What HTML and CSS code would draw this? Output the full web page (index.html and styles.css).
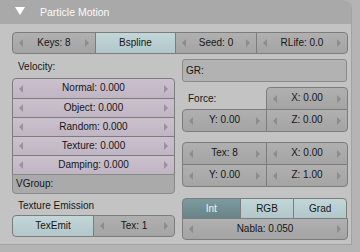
FILE: index.html
```html
<!DOCTYPE html>
<html lang="en">
<head>
  <meta charset="UTF-8">
  <title>Particle Motion</title>
  <link rel="stylesheet" href="styles.css">
</head>
<body>
  <div class="panel">
    <div class="panel-header">
      <svg class="collapse" width="12" height="10" viewBox="0 0 12 10"><polygon points="1,1 11,1 6,9" fill="#fff"/></svg>
      <span class="title">Particle Motion</span>
    </div>

    <div class="panel-body">
      <div class="btn-row top-row">
        <div class="btn num w-keys">Keys: 8</div>
        <div class="btn toggle on-light w-bspline">Bspline</div>
        <div class="btn num w-seed">Seed: 0</div>
        <div class="btn num w-rlife">RLife: 0.0</div>
      </div>

      <div class="columns">
        <div class="col">
          <div class="label label-velocity">Velocity:</div>
          <div class="stack">
            <div class="btn num lav">Normal: 0.000</div>
            <div class="btn num lav">Object: 0.000</div>
            <div class="btn num lav">Random: 0.000</div>
            <div class="btn num lav">Texture: 0.000</div>
            <div class="btn num lav">Damping: 0.000</div>
            <div class="btn field vgroup">VGroup:</div>
          </div>
          <div class="label label-emit">Texture Emission</div>
          <div class="btn-row">
            <div class="btn toggle on-light w-half">TexEmit</div>
            <div class="btn num w-half">Tex: 1</div>
          </div>
        </div>

        <div class="col">
          <div class="btn field gr">GR:</div>

          <div class="grid2 force">
            <div class="label cell-label">Force:</div>
            <div class="btn num">X: 0.00</div>
            <div class="btn num">Y: 0.00</div>
            <div class="btn num">Z: 0.00</div>
          </div>

          <div class="grid2 tex">
            <div class="btn num">Tex: 8</div>
            <div class="btn num">X: 0.00</div>
            <div class="btn num">Y: 0.00</div>
            <div class="btn num">Z: 1.00</div>
          </div>

          <div class="mode">
            <div class="btn-row">
              <div class="btn toggle active w-int">Int</div>
              <div class="btn toggle on-light w-rgb">RGB</div>
              <div class="btn toggle on-light w-grad">Grad</div>
            </div>
            <div class="btn num nabla">Nabla: 0.050</div>
          </div>
        </div>
      </div>
    </div>
  </div>
</body>
</html>
```

FILE: styles.css
```css
body {
  margin: 0;
  width: 360px;
  height: 252px;
  background: #b4b4b4;
  font-family: "Liberation Sans", Arial, sans-serif;
  font-size: 10px;
  color: #161616;
  overflow: hidden;
}
.panel {
  width: 352px;
  height: 245px;
  background: #c3c3c3;
  border-top-right-radius: 8px;
  border-right: 1px solid #a2a2a2;
  border-bottom: 1px solid #a2a2a2;
  box-sizing: border-box;
  overflow: hidden;
}
.panel-header {
  height: 24px;
  background: #a9a9a9;
  border-top-right-radius: 8px;
  display: flex;
  align-items: center;
  padding-left: 14px;
}
.collapse {
  margin-right: 14px;
  margin-top: -2px;
}
.title {
  color: #fafafa;
  font-size: 10.5px;
}
.panel-body {
  padding: 8px 0 0 12px;
}
.btn-row {
  display: flex;
}
.btn {
  position: relative;
  box-sizing: border-box;
  height: 22px;
  line-height: 20px;
  text-align: center;
  border: 1px solid #7c7c7c;
  white-space: nowrap;
}
.btn-row .btn + .btn {
  margin-left: -1px;
}
.btn-row .btn:first-child {
  border-radius: 4px 0 0 4px;
}
.btn-row .btn:last-child {
  border-radius: 0 4px 4px 0;
}
.num {
  background: linear-gradient(#b0b0b0, #a4a4a4);
}
.num::before,
.num::after {
  content: "";
  position: absolute;
  top: 50%;
  margin-top: -4px;
  border-top: 4px solid transparent;
  border-bottom: 4px solid transparent;
}
.num::before {
  left: 6px;
  border-right: 4px solid #8c8c8c;
}
.num::after {
  right: 6px;
  border-left: 4px solid #8c8c8c;
}
.lav {
  background: linear-gradient(#cbc1cd, #c0b5c4);
}
.lav::before {
  border-right-color: #9a919c;
}
.lav::after {
  border-left-color: #9a919c;
}
.on-light {
  background: linear-gradient(#c3d6d8, #b2c7ca);
}
.active {
  background: linear-gradient(#7d9a9e, #688488);
  color: #f4f4f4;
}
.field {
  background: #b2b2b2;
  text-align: left;
  padding-left: 3px;
  border-color: #8a8a8a;
  border-radius: 3px;
}
.w-keys { width: 84px; }
.w-bspline { width: 81px; }
.w-seed { width: 82px; }
.w-rlife { width: 92px; }
.w-half { width: 82px; }
.w-int { width: 59px; }
.w-rgb { width: 55px; }
.w-grad { width: 54px; }

.columns {
  display: flex;
  gap: 7px;
  margin-top: 5px;
}
.col {
  width: 163px;
}
.col + .col {
  width: 165px;
}
.label {
  padding-left: 6px;
}
.label-velocity {
  height: 19px;
  line-height: 16px;
}
.stack .btn {
  height: 20px;
  line-height: 18px;
  border-radius: 0;
  margin-top: -1px;
}
.stack .btn:first-child {
  margin-top: 0;
  height: 21px;
  border-radius: 4px 4px 0 0;
}
.stack .vgroup {
  border-radius: 0 0 4px 4px;
  background: #aaaaaa;
}
.label-emit {
  height: 21px;
  line-height: 24px;
}
.gr {
  height: 23px;
  line-height: 21px;
}
.grid2 {
  display: grid;
  grid-template-columns: 85px 81px;
  grid-auto-rows: 22px;
}
.grid2 .btn {
  margin: 0 0 -1px -1px;
  height: 23px;
}
.grid2 .btn:nth-child(1) { margin-left: 0; }
.grid2 .btn:nth-child(3) { margin-left: 0; }
.force {
  margin-top: 5px;
}
.force .cell-label {
  line-height: 24px;
}
.force .btn:nth-child(2) { border-radius: 4px 4px 0 0; }
.force .btn:nth-child(3) { border-radius: 4px 0 0 4px; }
.force .btn:nth-child(4) { border-radius: 0 0 4px 0; }
.tex {
  margin-top: 11px;
}
.tex .btn:nth-child(1) { border-radius: 4px 0 0 0; }
.tex .btn:nth-child(2) { border-radius: 0 4px 0 0; }
.tex .btn:nth-child(3) { border-radius: 0 0 0 4px; }
.tex .btn:nth-child(4) { border-radius: 0 0 4px 0; }
.mode {
  margin-top: 12px;
}
.mode .btn-row .btn {
  height: 21px;
  line-height: 19px;
}
.mode .btn-row .btn:first-child { border-radius: 4px 0 0 0; }
.mode .btn-row .btn:last-child { border-radius: 0 4px 0 0; }
.nabla {
  width: 166px;
  margin-top: -1px;
  border-radius: 0 0 4px 4px;
}
```
